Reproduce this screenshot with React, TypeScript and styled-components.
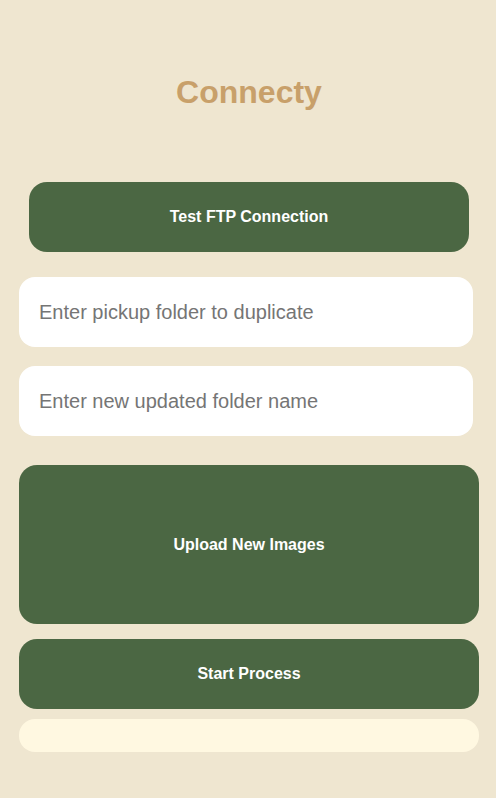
import React from "react";
import styled, { createGlobalStyle } from "styled-components";

const Global = createGlobalStyle`
  html, body { margin: 0; padding: 0; background: #efe6d0; }
  body { font-family: "Liberation Sans", Arial, sans-serif; }
  * { box-sizing: border-box; }
`;

const Page = styled.main`
  width: 496px;
  min-height: 798px;
  background: #efe6d0;
  padding: 74px 17px 0 19px;
  display: flex;
  flex-direction: column;
`;

const Title = styled.h1`
  margin: 0;
  font-size: 32px;
  line-height: 36px;
  font-weight: 700;
  color: #c8a06a;
  text-align: center;
`;

const Button = styled.button<{ $h: number; $inset?: number; $mt: number }>`
  display: flex;
  align-items: center;
  justify-content: center;
  height: ${(p) => p.$h}px;
  margin: ${(p) => p.$mt}px ${(p) => p.$inset ?? 0}px 0;
  border: none;
  border-radius: 18px;
  background: #4b6743;
  color: #ffffff;
  font-family: "Liberation Sans", Arial, sans-serif;
  font-size: 16px;
  font-weight: 700;
  cursor: pointer;
`;

const Input = styled.input<{ $mt: number }>`
  width: 454px;
  height: 70px;
  margin-top: ${(p) => p.$mt}px;
  padding: 0 20px;
  border: none;
  border-radius: 16px;
  background: #ffffff;
  font-family: "Liberation Sans", Arial, sans-serif;
  font-size: 20px;
  color: #333;
  outline: none;
  &::placeholder { color: #757575; }
`;

const Status = styled.div`
  height: 33px;
  margin-top: 10px;
  border-radius: 16px;
  background: #fff8e1;
`;

export default function App() {
  return (
    <>
      <Global />
      <Page>
        <Title>Connecty</Title>
        <Button $h={70} $inset={10} $mt={72}>Test FTP Connection</Button>
        <Input $mt={25} placeholder="Enter pickup folder to duplicate" />
        <Input $mt={19} placeholder="Enter new updated folder name" />
        <Button $h={159} $mt={29}>Upload New Images</Button>
        <Button $h={70} $mt={15}>Start Process</Button>
        <Status />
      </Page>
    </>
  );
}
